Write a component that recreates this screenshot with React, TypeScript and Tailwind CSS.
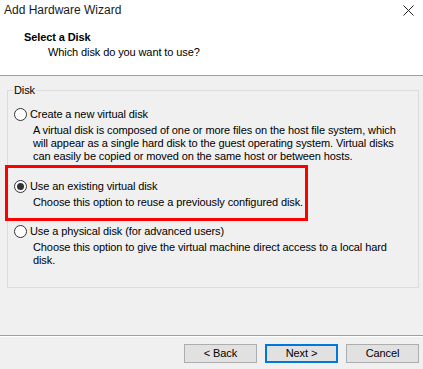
import React from "react";

const font = { fontFamily: "'Liberation Sans', Arial, sans-serif" };

function Radio({ checked }: { checked?: boolean }) {
  return (
    <span className="w-[13px] h-[13px] rounded-full border border-[#333333] bg-white flex items-center justify-center shrink-0">
      {checked && <span className="w-[7px] h-[7px] rounded-full bg-[#333333]" />}
    </span>
  );
}

function Option({
  label,
  lines,
  checked,
  className,
}: {
  label: string;
  lines: string[];
  checked?: boolean;
  className?: string;
}) {
  return (
    <div className={"flex flex-col " + (className ?? "")}>
      <div className="flex items-center gap-[3px] h-[16px]">
        <Radio checked={checked} />
        <span>{label}</span>
      </div>
      <div className="pl-[19px] pt-[2px] leading-[13px]">
        {lines.map((l) => (
          <div key={l}>{l}</div>
        ))}
      </div>
    </div>
  );
}

export default function App() {
  return (
    <div
      className="w-[423px] h-[369px] bg-[#f0f0f0] flex flex-col text-[11px] tracking-[-0.1px] text-black whitespace-nowrap overflow-hidden"
      style={font}
    >
      <div className="bg-white h-[76px] border-b border-[#a0a0a0] flex flex-col shrink-0">
        <div className="flex items-center justify-between h-[20px] pl-[4px] pr-[8px]">
          <span className="text-[12px] tracking-normal text-[#1a1a1a]">Add Hardware Wizard</span>
          <svg width="11" height="11" viewBox="0 0 11 11" className="mr-[1px] mt-[1px]">
            <path d="M0.5 0.5L10.5 10.5M10.5 0.5L0.5 10.5" stroke="#222" strokeWidth="1" />
          </svg>
        </div>
        <div className="pl-[24px] mt-[10px] font-bold leading-[15px]">Select a Disk</div>
        <div className="pl-[48px] leading-[15px]">Which disk do you want to use?</div>
      </div>

      <div className="pl-[7px] pt-[14px] h-[259px] shrink-0">
        <div className="relative w-[412px] h-[198px] border border-[#dcdcdc] pl-[6px] pt-[15px]">
          <span className="absolute left-[5px] top-[-8px] px-[1px] bg-[#f0f0f0] leading-[14px]">Disk</span>
          <Option
            label="Create a new virtual disk"
            lines={[
              "A virtual disk is composed of one or more files on the host file system, which",
              "will appear as a single hard disk to the guest operating system. Virtual disks",
              "can easily be copied or moved on the same host or between hosts.",
            ]}
          />
          <Option
            className="mt-[15px]"
            label="Use an existing virtual disk"
            checked
            lines={["Choose this option to reuse a previously configured disk."]}
          />
          <Option
            className="mt-[14px]"
            label="Use a physical disk (for advanced users)"
            lines={[
              "Choose this option to give the virtual machine direct access to a local hard",
              "disk.",
            ]}
          />
          <div className="absolute left-[-3px] top-[74px] w-[303px] h-[56px] border-[3px] border-[#ff0000]" />
        </div>
      </div>

      <div className="border-t border-[#a0a0a0] shadow-[inset_0_1px_0_#ffffff] flex-1 flex items-start justify-end gap-[8px] pt-[8px] pr-[4px]">
        <button className="w-[73px] h-[19px] bg-[#e1e1e1] border border-[#adadad] leading-none">&lt; Back</button>
        <button className="w-[73px] h-[19px] bg-[#e1e1e1] border-2 border-[#0078d7] leading-none">Next &gt;</button>
        <button className="w-[73px] h-[19px] bg-[#e1e1e1] border border-[#adadad] leading-none">Cancel</button>
      </div>
    </div>
  );
}
